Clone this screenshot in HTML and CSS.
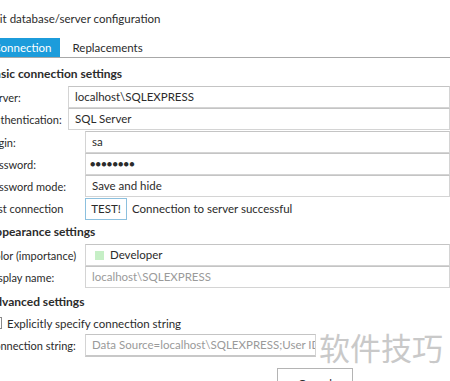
FILE: index.html
```html
<!DOCTYPE html>
<html lang="en">
<head>
  <meta charset="UTF-8" />
  <title>Edit database/server configuration</title>
  <link rel="stylesheet" href="styles.css">
</head>
<body>
  <div class="dialog">
    <div class="dialog-title">Edit database/server configuration</div>

    <div class="tab-strip">
      <div class="tab active">Connection</div>
      <div class="tab">Replacements</div>
    </div>

    <div class="group-title first">Basic connection settings</div>
    <div class="form-row short">
      <span class="label">Server:</span>
      <div class="field">localhost\SQLEXPRESS</div>
    </div>
    <div class="form-row short">
      <span class="label">Authentication:</span>
      <div class="field">SQL Server</div>
    </div>
    <div class="form-row spaced">
      <span class="label">Login:</span>
      <div class="field">sa</div>
    </div>
    <div class="form-row">
      <span class="label">Password:</span>
      <div class="field password">&#9679;&#9679;&#9679;&#9679;&#9679;&#9679;&#9679;&#9679;</div>
    </div>
    <div class="form-row">
      <span class="label">Password mode:</span>
      <div class="field">Save and hide</div>
    </div>
    <div class="form-row test-row">
      <span class="label">Test connection</span>
      <div class="test-line">
        <button class="test-btn">TEST!</button>
        <span class="test-status">Connection to server successful</span>
      </div>
    </div>

    <div class="group-title">Appearance settings</div>
    <div class="form-row">
      <span class="label">Color (importance)</span>
      <div class="field"><span class="swatch"></span>Developer</div>
    </div>
    <div class="form-row">
      <span class="label">Display name:</span>
      <div class="field disabled">localhost\SQLEXPRESS</div>
    </div>

    <div class="group-title advanced">Advanced settings</div>
    <label class="check-row">
      <span class="checkbox"></span>
      Explicitly specify connection string
    </label>
    <div class="form-row conn-row">
      <span class="label">Connection string:</span>
      <div class="field disabled conn-field">Data Source=localhost\SQLEXPRESS;User ID=sa;Password=********</div>
    </div>

    <div class="dialog-footer">
      <button class="footer-btn">Cancel</button>
    </div>

    <div class="watermark">软件技巧</div>
  </div>
</body>
</html>
```

FILE: styles.css
```css
* {
  box-sizing: border-box;
}

html, body {
  margin: 0;
  padding: 0;
  background: #ffffff;
  overflow: hidden;
}

.dialog {
  position: relative;
  margin-left: -13px;
  width: 463px;
  height: 381px;
  overflow: hidden;
  font-family: 'Lato', 'Open Sans', sans-serif;
  font-size: 11px;
  color: #2b2b2b;
}

.dialog-title {
  height: 38px;
  padding-top: 12px;
  font-size: 11.5px;
}

.tab-strip {
  display: flex;
  height: 20px;
  border-bottom: 1px solid #a8a8a8;
}

.tab {
  padding: 0 10px;
  line-height: 19px;
  font-size: 11.5px;
}

.tab.active {
  background-color: #1c9cdb;
  color: #ffffff;
  padding-left: 6px;
  padding-right: 8px;
  margin-right: 3px;
}

.group-title {
  font-weight: 700;
  font-size: 12px;
  height: 24px;
  line-height: 24px;
}

.group-title.first {
  margin-top: 4px;
}

.group-title.advanced {
  height: 25px;
  line-height: 27px;
}

.form-row {
  display: grid;
  grid-template-columns: 98px 1fr;
  align-items: center;
  height: 22px;
}

.form-row.short {
  grid-template-columns: 81px 1fr;
}

.form-row.spaced {
  margin-top: 1px;
}

.field {
  height: 22px;
  line-height: 20px;
  border: 1px solid #d4d4d4;
  border-top-color: #c4c4c4;
  padding-left: 6px;
  white-space: nowrap;
  overflow: hidden;
  display: flex;
  align-items: center;
  font-size: 11.5px;
}

.field.password {
  font-size: 9px;
  letter-spacing: 0.2px;
  padding-left: 4px;
}

.field.disabled {
  color: #9a9a9a;
}

.swatch {
  width: 9px;
  height: 9px;
  background-color: #c6efc6;
  margin: 0 6px 0 3px;
}

.test-row {
  height: 23px;
}

.test-line {
  display: flex;
  align-items: center;
  gap: 5px;
  font-size: 11.5px;
}

.test-btn {
  font-family: inherit;
  font-size: 11.5px;
  color: #2b2b2b;
  background: #ffffff;
  border: 1px solid #8cc0de;
  height: 22px;
  width: 42px;
  padding: 0;
}

.check-row {
  display: flex;
  align-items: center;
  gap: 5px;
  height: 20px;
  padding-left: 3px;
  font-size: 11.5px;
}

.checkbox {
  width: 12px;
  height: 12px;
  border: 1px solid #8a8a8a;
  background: #ffffff;
}

.conn-row {
  grid-template-columns: 98px 231px;
  height: 23px;
  margin-top: 1px;
}

.conn-field {
  height: 23px;
  border-bottom: 2px solid #c8c8c8;
}

.dialog-footer {
  display: flex;
  padding-left: 290px;
  margin-top: 11px;
}

.footer-btn {
  font-family: inherit;
  font-size: 11.5px;
  color: #2b2b2b;
  background: #ffffff;
  border: 1px solid #b4b4b4;
  width: 76px;
  height: 28px;
  padding: 3px 0 0;
  line-height: 14px;
}

.watermark {
  position: absolute;
  left: 332px;
  top: 327px;
  font-family: 'Noto Sans CJK SC', sans-serif;
  font-size: 31px;
  line-height: 40px;
  white-space: nowrap;
  color: #c9c9c9;
  background: #ffffff;
}
```
